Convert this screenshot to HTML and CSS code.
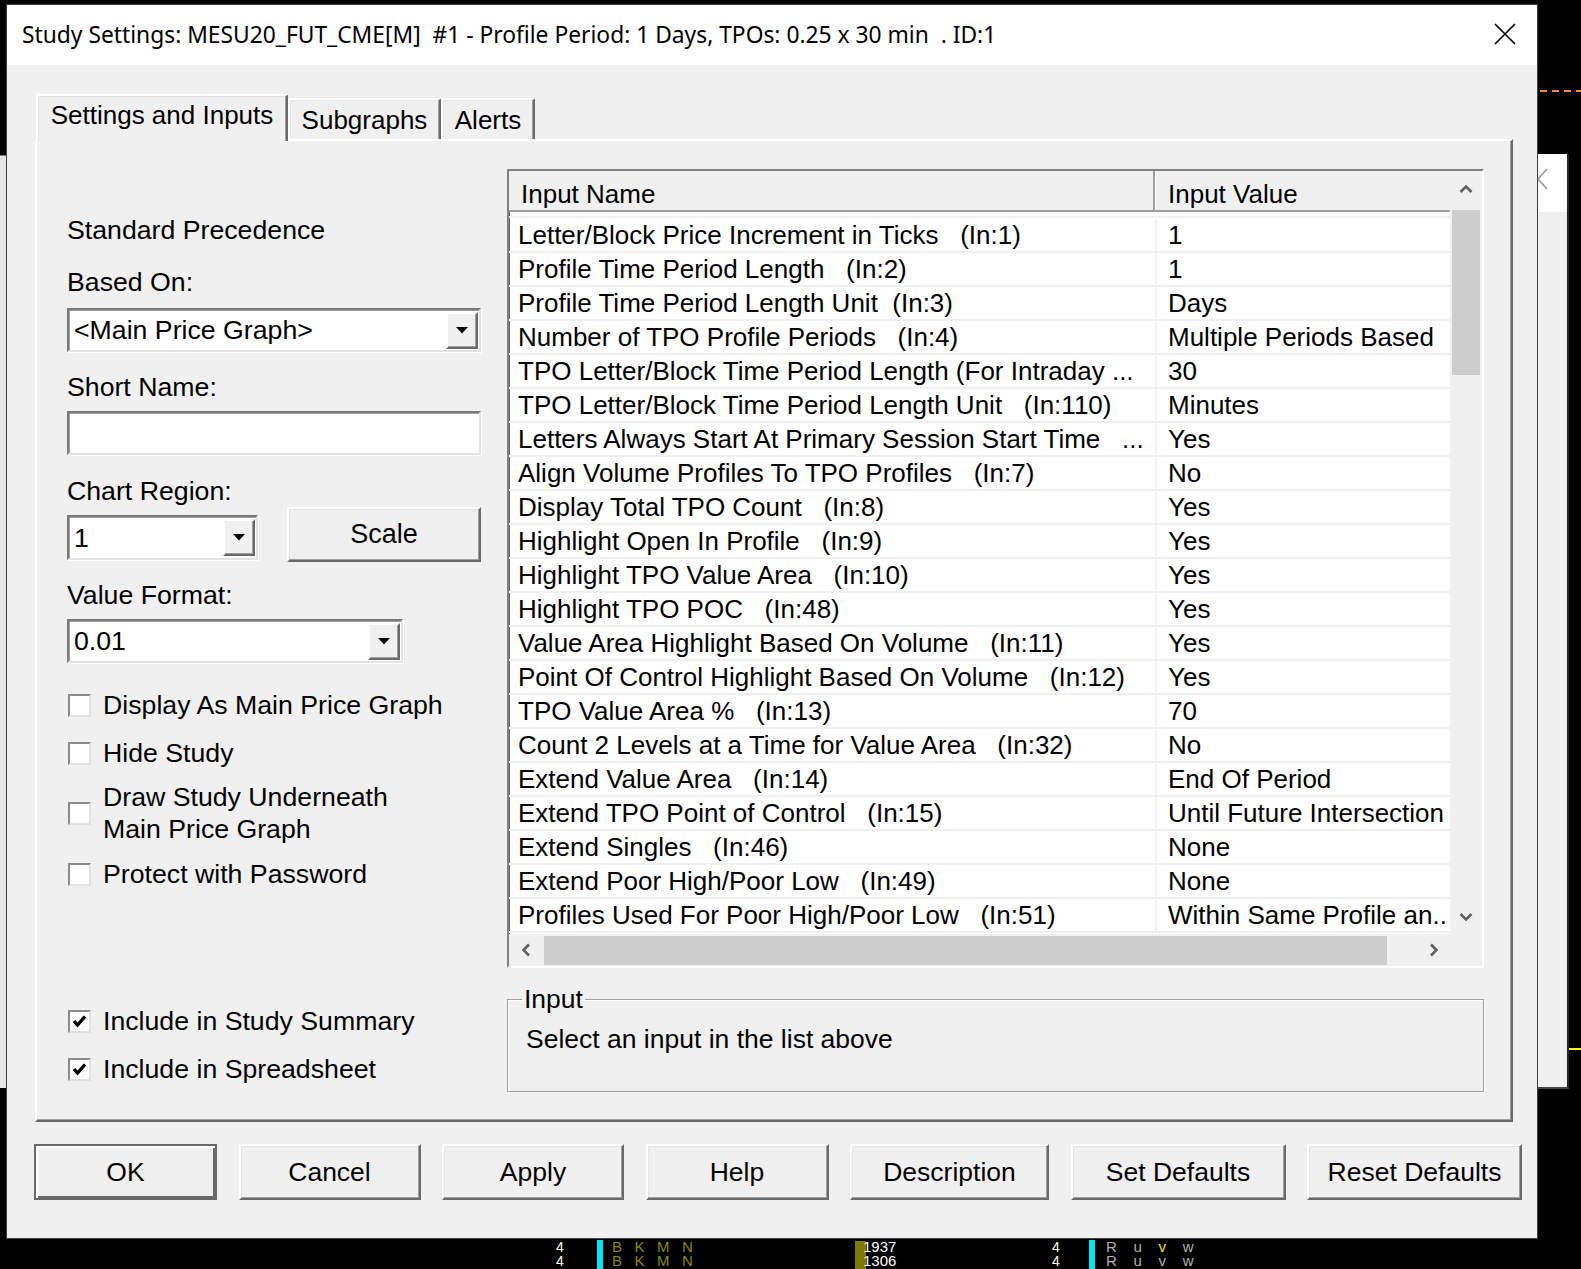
FILE: index.html
```html
<!DOCTYPE html>
<html>
<head>
<meta charset="utf-8">
<title>Study Settings</title>
<link rel="stylesheet" href="styles.css">
</head>
<body>
<div class="screen">
  <div class="bg-left"></div>
  <div class="bg-win">
    <div class="bg-win-top"><svg class="bg-win-x" width="20" height="22" viewBox="0 0 20 22"><path d="M1 1 L19 21 M19 1 L1 21" stroke="#9a9a9a" stroke-width="1.6" fill="none"/></svg></div>
  </div>
  <div class="bg-dash"></div>
  <div class="bg-yellow"></div>

  <div class="chart-strip">
    <div class="ch ch-4a"><span>4</span><span>4</span></div>
    <div class="ch-bar ch-bar-a"></div>
    <div class="ch ch-letters ch-olive"><span>B&nbsp;&nbsp;&nbsp;K&nbsp;&nbsp;&nbsp;M&nbsp;&nbsp;&nbsp;N</span><span>B&nbsp;&nbsp;&nbsp;K&nbsp;&nbsp;&nbsp;M&nbsp;&nbsp;&nbsp;N</span></div>
    <div class="ch-box"></div>
    <div class="ch ch-num"><span>1937</span><span>1306</span></div>
    <div class="ch ch-4b"><span>4</span><span>4</span></div>
    <div class="ch-bar ch-bar-b"></div>
    <div class="ch ch-letters ch-gray ch-ruvw"><span>R&nbsp;&nbsp;&nbsp;&nbsp;u&nbsp;&nbsp;&nbsp;&nbsp;<b class="yl">v</b>&nbsp;&nbsp;&nbsp;&nbsp;w</span><span>R&nbsp;&nbsp;&nbsp;&nbsp;u&nbsp;&nbsp;&nbsp;&nbsp;v&nbsp;&nbsp;&nbsp;&nbsp;w</span></div>
  </div>

  <div class="dialog">
    <div class="titlebar">
      <span class="title">Study Settings: MESU20_FUT_CME[M]  #1 - Profile Period: 1 Days, TPOs: 0.25 x 30 min  . ID:1</span>
      <svg class="close" width="22" height="22" viewBox="0 0 22 22"><path d="M1 1 L21 21 M21 1 L1 21" stroke="#000" stroke-width="1.7" fill="none"/></svg>
    </div>

    <div class="client">
      <div class="tabs">
        <div class="tab tab-sel">Settings and Inputs</div>
        <div class="tab tab-sub">Subgraphs</div>
        <div class="tab tab-alerts">Alerts</div>
      </div>

      <div class="panel">
        <div class="leftcol">
          <div class="lbl m-prec">Standard Precedence</div>
          <div class="lbl m-based">Based On:</div>
          <div class="combo combo-wide m-combo1">
            <span class="combo-text">&lt;Main Price Graph&gt;</span>
            <span class="drop"><svg width="12" height="7" viewBox="0 0 12 7"><polygon points="0,0 12,0 6,6.5" fill="#000"/></svg></span>
          </div>
          <div class="lbl m-short">Short Name:</div>
          <div class="textbox m-text"></div>
          <div class="lbl m-region">Chart Region:</div>
          <div class="region-row">
            <div class="combo combo-region">
              <span class="combo-text">1</span>
              <span class="drop"><svg width="12" height="7" viewBox="0 0 12 7"><polygon points="0,0 12,0 6,6.5" fill="#000"/></svg></span>
            </div>
            <div class="btn btn-scale">Scale</div>
          </div>
          <div class="lbl m-format">Value Format:</div>
          <div class="combo combo-format m-combo3">
            <span class="combo-text">0.01</span>
            <span class="drop"><svg width="12" height="7" viewBox="0 0 12 7"><polygon points="0,0 12,0 6,6.5" fill="#000"/></svg></span>
          </div>

          <div class="cb m-cb1"><span class="box"></span><span class="cb-text">Display As Main Price Graph</span></div>
          <div class="cb m-cb2"><span class="box"></span><span class="cb-text">Hide Study</span></div>
          <div class="cb m-cb3"><span class="box"></span><span class="cb-text">Draw Study Underneath<br>Main Price Graph</span></div>
          <div class="cb m-cb4"><span class="box"></span><span class="cb-text">Protect with Password</span></div>

          <div class="cb m-cb5"><span class="box"><svg width="15" height="14" viewBox="0 0 15 14"><path d="M2 7 L5.5 11 L13 2.5" stroke="#000" stroke-width="3.4" fill="none"/></svg></span><span class="cb-text">Include in Study Summary</span></div>
          <div class="cb m-cb6"><span class="box"><svg width="15" height="14" viewBox="0 0 15 14"><path d="M2 7 L5.5 11 L13 2.5" stroke="#000" stroke-width="3.4" fill="none"/></svg></span><span class="cb-text">Include in Spreadsheet</span></div>
        </div>

        <div class="rightcol">
          <div class="table">
            <div class="list">
              <div class="thead">
                <div class="th th-name">Input Name</div>
                <div class="th th-value">Input Value</div>
              </div>
              <div class="rows">
                <div class="row"><div class="c-name">Letter/Block Price Increment in Ticks   (In:1)</div><div class="c-val">1</div></div>
                <div class="row"><div class="c-name">Profile Time Period Length   (In:2)</div><div class="c-val">1</div></div>
                <div class="row"><div class="c-name">Profile Time Period Length Unit  (In:3)</div><div class="c-val">Days</div></div>
                <div class="row"><div class="c-name">Number of TPO Profile Periods   (In:4)</div><div class="c-val">Multiple Periods Based</div></div>
                <div class="row"><div class="c-name">TPO Letter/Block Time Period Length (For Intraday ...</div><div class="c-val">30</div></div>
                <div class="row"><div class="c-name">TPO Letter/Block Time Period Length Unit   (In:110)</div><div class="c-val">Minutes</div></div>
                <div class="row"><div class="c-name">Letters Always Start At Primary Session Start Time   ...</div><div class="c-val">Yes</div></div>
                <div class="row"><div class="c-name">Align Volume Profiles To TPO Profiles   (In:7)</div><div class="c-val">No</div></div>
                <div class="row"><div class="c-name">Display Total TPO Count   (In:8)</div><div class="c-val">Yes</div></div>
                <div class="row"><div class="c-name">Highlight Open In Profile   (In:9)</div><div class="c-val">Yes</div></div>
                <div class="row"><div class="c-name">Highlight TPO Value Area   (In:10)</div><div class="c-val">Yes</div></div>
                <div class="row"><div class="c-name">Highlight TPO POC   (In:48)</div><div class="c-val">Yes</div></div>
                <div class="row"><div class="c-name">Value Area Highlight Based On Volume   (In:11)</div><div class="c-val">Yes</div></div>
                <div class="row"><div class="c-name">Point Of Control Highlight Based On Volume   (In:12)</div><div class="c-val">Yes</div></div>
                <div class="row"><div class="c-name">TPO Value Area %   (In:13)</div><div class="c-val">70</div></div>
                <div class="row"><div class="c-name">Count 2 Levels at a Time for Value Area   (In:32)</div><div class="c-val">No</div></div>
                <div class="row"><div class="c-name">Extend Value Area   (In:14)</div><div class="c-val">End Of Period</div></div>
                <div class="row"><div class="c-name">Extend TPO Point of Control   (In:15)</div><div class="c-val">Until Future Intersection</div></div>
                <div class="row"><div class="c-name">Extend Singles   (In:46)</div><div class="c-val">None</div></div>
                <div class="row"><div class="c-name">Extend Poor High/Poor Low   (In:49)</div><div class="c-val">None</div></div>
                <div class="row"><div class="c-name">Profiles Used For Poor High/Poor Low   (In:51)</div><div class="c-val">Within Same Profile an..</div></div>
              </div>
            </div>
            <div class="vscroll">
              <div class="sb-btn"><svg width="14" height="9" viewBox="0 0 14 9"><path d="M1.5 8 L7 2.5 L12.5 8" stroke="#606060" stroke-width="2.6" fill="none"/></svg></div>
              <div class="vthumb"></div>
              <div class="sb-fill"></div>
              <div class="sb-btn"><svg width="14" height="9" viewBox="0 0 14 9"><path d="M1.5 1 L7 6.5 L12.5 1" stroke="#606060" stroke-width="2.6" fill="none"/></svg></div>
            </div>
            <div class="hscroll">
              <div class="sb-hbtn"><svg width="9" height="14" viewBox="0 0 9 14"><path d="M8 1.5 L2.5 7 L8 12.5" stroke="#606060" stroke-width="2.6" fill="none"/></svg></div>
              <div class="hthumb"></div>
              <div class="sb-fill"></div>
              <div class="sb-hbtn"><svg width="9" height="14" viewBox="0 0 9 14"><path d="M1 1.5 L6.5 7 L1 12.5" stroke="#606060" stroke-width="2.6" fill="none"/></svg></div>
            </div>
            <div class="corner"></div>
          </div>

          <fieldset class="group">
            <legend>Input</legend>
            <div class="group-text">Select an input in the list above</div>
          </fieldset>
        </div>
      </div>

      <div class="buttons">
        <div class="btn btn-default w183">OK</div>
        <div class="btn w182">Cancel</div>
        <div class="btn w182">Apply</div>
        <div class="btn w183">Help</div>
        <div class="btn w199">Description</div>
        <div class="btn w215">Set Defaults</div>
        <div class="btn w215">Reset Defaults</div>
      </div>
    </div>
  </div>
</div>
</body>
</html>
```

FILE: styles.css
```css
* { box-sizing: border-box; }

html, body {
  margin: 0;
  padding: 0;
  background: #000;
}

body {
  width: 1581px;
  height: 1269px;
  overflow: hidden;
  font-family: "Liberation Sans", Arial, sans-serif;
  color: #000;
}

.screen {
  position: relative;
  width: 1581px;
  height: 1269px;
  background: #000;
  overflow: hidden;
}

/* ---------- background (chart behind the dialog) ---------- */
.bg-left {
  position: absolute;
  left: 0;
  top: 155px;
  width: 6px;
  height: 933px;
  background: #e6e6e6;
  border-top: 1px solid #777;
}

.bg-win {
  position: absolute;
  left: 1538px;
  top: 154px;
  width: 31px;
  height: 935px;
  background: #f0f0f0;
  border-right: 2px solid #222;
  border-bottom: 2px solid #444;
}

.bg-win-top {
  height: 58px;
  background: #fff;
  overflow: hidden;
}

.bg-win-x {
  display: block;
  margin: 14px 0 0 -10px;
}

.bg-dash {
  position: absolute;
  left: 1540px;
  top: 90px;
  width: 41px;
  height: 2px;
  background: repeating-linear-gradient(90deg, #f08a3c 0 7px, transparent 7px 12px);
}

.bg-yellow {
  position: absolute;
  left: 1569px;
  top: 1048px;
  width: 12px;
  height: 2px;
  background: #ffff00;
}

.chart-strip {
  position: absolute;
  left: 0;
  top: 1240px;
  width: 1581px;
  height: 29px;
  font-family: "Liberation Sans Narrow", "Liberation Sans", sans-serif;
  font-size: 14px;
  line-height: 14px;
}

.ch {
  position: absolute;
  top: 0;
  display: flex;
  flex-direction: column;
  white-space: nowrap;
}

.ch-4a { left: 556px; color: #fff; }
.ch-4b { left: 1052px; color: #fff; }
.ch-olive { color: #8a8a00; }
.ch-gray { color: #b0b0b0; }
.ch-letters { left: 612px; font-size: 15px; }
.ch-ruvw { left: 1106px; }
.yl { color: #e8e800; font-weight: normal; }
.ch-num { left: 863px; color: #fff; font-size: 15px; }

.ch-bar {
  position: absolute;
  top: 0;
  width: 6px;
  height: 29px;
  background: #00e5ee;
}
.ch-bar-a { left: 597px; }
.ch-bar-b { left: 1089px; }

.ch-box {
  position: absolute;
  left: 855px;
  top: 1px;
  width: 11px;
  height: 28px;
  background: #7c7c00;
}

/* ---------- dialog ---------- */
.dialog {
  position: absolute;
  left: 6px;
  top: 4px;
  width: 1532px;
  height: 1235px;
  border: 1px solid #3e3e3e;
  background: #f0f0f0;
  display: flex;
  flex-direction: column;
}

.titlebar {
  flex: none;
  height: 60px;
  background: #fff;
  display: flex;
  align-items: center;
  padding: 0 21px 0 15px;
}

.title {
  flex: 1;
  font-family: "Noto Sans", "Open Sans", sans-serif;
  font-size: 22.8px;
  white-space: pre;
  color: #000;
  padding-bottom: 1px;
}

.close { display: block; margin-top: -3px; }

.client {
  flex: 1;
  display: flex;
  flex-direction: column;
  padding: 29px 0 0 28px;
}

/* ---------- tabs ---------- */
.tabs {
  position: relative;
  z-index: 2;
  height: 45px;
  display: flex;
  align-items: flex-end;
  padding-left: 1px;
}

.tab {
  height: 41px;
  font-size: 26px;
  line-height: 30px;
  display: flex;
  align-items: center;
  justify-content: center;
  background: #f0f0f0;
  border-top: 2px solid #fff;
  border-left: 2px solid #fff;
  border-right: 2px solid #696969;
  border-radius: 2px 2px 0 0;
  box-shadow: inset -1px 0 0 #a0a0a0, inset 1px 1px 0 #e3e3e3;
  white-space: nowrap;
}

.tab-sel {
  width: 252px;
  height: 47px;
  margin-bottom: -2px;
  padding-bottom: 7px;
}

.tab-sub { width: 153px; }
.tab-alerts { width: 94px; }

/* ---------- panel ---------- */
.panel {
  width: 1478px;
  height: 983px;
  display: flex;
  gap: 26px;
  padding: 28px 27px 0 30px;
  border-top: 2px solid #fff;
  border-left: 2px solid #fff;
  border-right: 2px solid #696969;
  border-bottom: 2px solid #696969;
  box-shadow: inset -1px -1px 0 #a0a0a0;
}

.leftcol {
  width: 414px;
  flex: none;
  display: flex;
  flex-direction: column;
  align-items: flex-start;
  font-size: 26.7px;
}

.lbl {
  line-height: 30px;
  white-space: nowrap;
}

.m-prec { margin-top: 46px; }
.m-based { margin-top: 22px; }
.m-combo1 { margin-top: 11px; }
.m-short { margin-top: 20px; }
.m-text { margin-top: 9px; }
.m-region { margin-top: 21px; }
.m-format { margin-top: 18px; }
.m-combo3 { margin-top: 9px; }
.m-cb1 { margin-top: 26px; }
.m-cb2 { margin-top: 16px; }
.m-cb3 { margin-top: 12px; }
.m-cb4 { margin-top: 13px; }
.m-cb5 { margin-top: 115px; }
.m-cb6 { margin-top: 16px; }

.combo, .textbox {
  height: 44px;
  background: #fff;
  border: 2px solid;
  border-color: #7a7a7a #e3e3e3 #e3e3e3 #7a7a7a;
  box-shadow: inset 1px 1px 0 #a0a0a0, 1px 1px 0 #fff;
}

.textbox { width: 414px; }

.combo {
  display: flex;
  align-items: center;
  justify-content: space-between;
  padding: 0 1px 0 5px;
}

.combo-wide { width: 414px; }
.combo-region { width: 191px; height: 45px; margin-top: 8px; }
.combo-format { width: 336px; }

.combo-text {
  line-height: 30px;
  white-space: nowrap;
}

.drop {
  width: 32px;
  height: 37px;
  background: #f0f0f0;
  border: 2px solid;
  border-color: #fff #696969 #696969 #fff;
  box-shadow: inset -1px -1px 0 #a0a0a0;
  display: flex;
  align-items: center;
  justify-content: center;
}

.drop svg { display: block; }

.region-row {
  width: 414px;
  display: flex;
  justify-content: space-between;
  align-items: flex-start;
  margin-top: 1px;
}

.btn {
  height: 56px;
  font-size: 26.5px;
  background: #f0f0f0;
  border: 2px solid;
  border-color: #fff #696969 #696969 #fff;
  box-shadow: inset -1px -1px 0 #a0a0a0, inset 1px 1px 0 #e3e3e3;
  display: flex;
  align-items: center;
  justify-content: center;
  white-space: nowrap;
  flex: none;
}

.btn-scale {
  width: 194px;
  height: 55px;
  font-size: 27px;
}

.cb {
  display: flex;
  align-items: center;
  gap: 12px;
  padding-left: 1px;
}

.cb-text {
  line-height: 32px;
  white-space: nowrap;
}

.box {
  width: 23px;
  height: 23px;
  flex: none;
  background: #fff;
  border: 2px solid;
  border-color: #8a8a8a #e3e3e3 #e3e3e3 #8a8a8a;
  display: flex;
  align-items: center;
  justify-content: center;
}

.box svg { display: block; }

/* ---------- inputs list ---------- */
.rightcol {
  width: 977px;
  flex: none;
  display: flex;
  flex-direction: column;
}

.table {
  height: 799px;
  background: #fff;
  border: 2px solid;
  border-color: #828282 #fff #fff #828282;
  box-shadow: inset 1px 1px 0 #696969;
  display: grid;
  grid-template-columns: 941px 32px;
  grid-template-rows: 763px 32px;
  font-size: 26px;
}

.list {
  overflow: hidden;
  display: flex;
  flex-direction: column;
}

.thead {
  height: 41px;
  flex: none;
  display: flex;
  background: #f0f0f0;
  border-bottom: 2px solid #a0a0a0;
}

.th {
  line-height: 31px;
  padding-top: 8px;
  white-space: nowrap;
}

.th-name {
  width: 646px;
  padding-left: 12px;
  border-right: 2px solid #a0a0a0;
  box-shadow: 1px 0 0 #fff;
}

.th-value { padding-left: 13px; }

.rows {
  padding-top: 4px;
  flex: 1;
}

.rows::before {
  content: "";
  display: block;
  height: 2px;
  background: #f0f0f0;
  margin-bottom: 1px;
}

.row {
  height: 34px;
  display: flex;
  border-bottom: 2px solid #f0f0f0;
}

.c-name {
  width: 648px;
  flex: none;
  padding-left: 9px;
  line-height: 32px;
  white-space: pre;
  overflow: hidden;
  border-right: 2px solid #f0f0f0;
}

.c-val {
  flex: 1;
  padding-left: 11px;
  line-height: 32px;
  white-space: pre;
  overflow: hidden;
}

.vscroll {
  background: #f0f0f0;
  display: flex;
  flex-direction: column;
  align-items: center;
}

.sb-btn {
  width: 32px;
  height: 34px;
  flex: none;
  display: flex;
  align-items: center;
  justify-content: center;
}

.sb-btn svg, .sb-hbtn svg { display: block; }

.vthumb {
  width: 28px;
  height: 165px;
  margin-top: 5px;
  background: #cdcdcd;
  flex: none;
}

.sb-fill { flex: 1; }

.hscroll {
  background: #f0f0f0;
  display: flex;
  align-items: center;
}

.sb-hbtn {
  width: 32px;
  height: 32px;
  flex: none;
  display: flex;
  align-items: center;
  justify-content: center;
}

.hthumb {
  width: 843px;
  height: 29px;
  margin-left: 3px;
  background: #cdcdcd;
  flex: none;
}

.corner { background: #f0f0f0; }

/* ---------- group box ---------- */
.group {
  margin: 16px 0 0 0;
  height: 108px;
  padding: 10px 0 0 18px;
  border: 1px solid #a0a0a0;
  box-shadow: inset 1px 1px 0 #fff, 1px 1px 0 #fff;
  font-size: 26.5px;
  min-width: 0;
}

.group legend {
  line-height: 30px;
  padding: 0 2px;
  margin-left: -4px;
}

.group-text {
  line-height: 30px;
  white-space: nowrap;
}

/* ---------- bottom buttons ---------- */
.buttons {
  display: flex;
  gap: 21.5px;
  margin: 22px 0 0 -1px;
}

.btn-default {
  border-color: #696969;
  box-shadow: inset 2px 2px 0 #fff, inset -2px -2px 0 #696969;
}

.w182 { width: 182px; }
.w183 { width: 183px; }
.w199 { width: 199px; }
.w215 { width: 215px; }
```
